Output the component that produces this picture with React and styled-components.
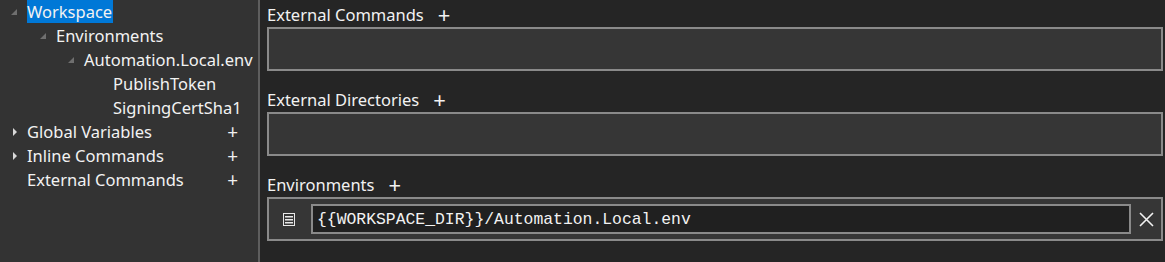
import React from 'react';
import styled, { createGlobalStyle } from 'styled-components';

const GlobalStyle = createGlobalStyle`
  html, body {
    margin: 0;
    padding: 0;
    height: 100%;
    background: #252525;
    overflow: hidden;
  }
  #root {
    height: 100%;
  }
`;

const uiFont = `'Segoe UI', 'Noto Sans', 'Open Sans', sans-serif`;

const Window = styled.div`
  display: flex;
  height: 100vh;
  font-family: ${uiFont};
  font-size: 16.5px;
  color: #f2f2f2;
`;

const Sidebar = styled.div`
  width: 258px;
  flex-shrink: 0;
  background: #333333;
  border-right: 2px solid #5e5e5e;
`;

const TreeRow = styled.div`
  display: flex;
  align-items: center;
  height: 24px;
  padding-left: ${({ $level }) => 10 + Math.round($level * 28.7)}px;
  padding-right: 20px;
`;

const Toggle = styled.span`
  width: 18px;
  height: 24px;
  flex-shrink: 0;
  display: flex;
  align-items: center;
  justify-content: flex-start;
  padding-left: ${({ $closed }) => ($closed ? 2 : 0)}px;
  box-sizing: border-box;
`;

const Label = styled.span`
  flex: 1;
  white-space: nowrap;
  line-height: 24px;
  > span {
    padding: 0 1px 0 0;
    margin-left: -1px;
    background: ${({ $selected }) => ($selected ? '#0078d7' : 'transparent')};
    display: inline-block;
    line-height: 23px;
  }
`;

const SidePlus = styled.span`
  font-size: 19px;
  line-height: 24px;
  color: #f0f0f0;
`;

const Expanded = () => (
  <svg width="8" height="8" viewBox="0 0 8 8">
    <path d="M7 1 L7 7 L1 7 Z" fill="#6f6f6f" />
  </svg>
);

const Collapsed = () => (
  <svg width="6" height="10" viewBox="0 0 6 10">
    <path d="M1 1 L5 5 L1 9 Z" fill="#d8d8d8" />
  </svg>
);

const TreeItem = ({ level, state, selected, plus, children }) => (
  <TreeRow $level={level}>
    <Toggle $closed={state === 'closed'}>
      {state === 'open' && <Expanded />}
      {state === 'closed' && <Collapsed />}
    </Toggle>
    <Label $selected={selected}>
      <span>{children}</span>
    </Label>
    {plus && <SidePlus>+</SidePlus>}
  </TreeRow>
);

const Main = styled.div`
  flex: 1;
  padding: 3px 2px 0 7px;
  display: flex;
  flex-direction: column;
  gap: 17px;
`;

const Section = styled.div`
  display: flex;
  flex-direction: column;
`;

const SectionHead = styled.div`
  display: flex;
  align-items: center;
  gap: 14px;
  height: 24px;
  line-height: 24px;
`;

const HeadPlus = styled.span`
  font-size: 22px;
  font-weight: 400;
  line-height: 20px;
  margin-top: -3px;
`;

const ListBox = styled.div`
  height: 44px;
  box-sizing: border-box;
  border: 2px solid #8a8a8a;
  background: #363636;
  display: flex;
  align-items: center;
  padding: 0 0 0 14px;
`;

const ItemIcon = () => (
  <svg width="12" height="13" viewBox="0 0 12 13" style={{ flexShrink: 0 }}>
    <rect x="0.5" y="0.5" width="11" height="12" fill="none" stroke="#e8e8e8" />
    <rect x="2" y="3" width="8" height="1.5" fill="#e8e8e8" />
    <rect x="2" y="6" width="8" height="1.5" fill="#e8e8e8" />
    <rect x="2" y="9" width="8" height="1.5" fill="#e8e8e8" />
  </svg>
);

const PathInput = styled.div`
  flex: 1;
  margin-left: 16px;
  height: 30px;
  box-sizing: border-box;
  border: 2px solid #8a8a8a;
  background: #202020;
  display: flex;
  align-items: center;
  padding-left: 4px;
  font-family: 'Liberation Mono', 'DejaVu Sans Mono', monospace;
  font-size: 16.4px;
  color: #f2f2f2;
`;

const RemoveButton = styled.span`
  width: 30px;
  display: flex;
  align-items: center;
  justify-content: center;
`;

const CloseIcon = () => (
  <svg width="15" height="15" viewBox="0 0 15 15">
    <path d="M1 1 L14 14 M14 1 L1 14" stroke="#f2f2f2" strokeWidth="1.6" />
  </svg>
);

const App = () => (
  <>
    <GlobalStyle />
    <Window>
      <Sidebar>
        <TreeItem level={0} state="open" selected>Workspace</TreeItem>
        <TreeItem level={1} state="open">Environments</TreeItem>
        <TreeItem level={2} state="open">Automation.Local.env</TreeItem>
        <TreeItem level={3}>PublishToken</TreeItem>
        <TreeItem level={3}>SigningCertSha1</TreeItem>
        <TreeItem level={0} state="closed" plus>Global Variables</TreeItem>
        <TreeItem level={0} state="closed" plus>Inline Commands</TreeItem>
        <TreeItem level={0} plus>External Commands</TreeItem>
      </Sidebar>
      <Main>
        <Section>
          <SectionHead>
            External Commands <HeadPlus>+</HeadPlus>
          </SectionHead>
          <ListBox />
        </Section>
        <Section>
          <SectionHead>
            External Directories <HeadPlus>+</HeadPlus>
          </SectionHead>
          <ListBox />
        </Section>
        <Section>
          <SectionHead>
            Environments <HeadPlus>+</HeadPlus>
          </SectionHead>
          <ListBox>
            <ItemIcon />
            <PathInput>{'{{WORKSPACE_DIR}}/Automation.Local.env'}</PathInput>
            <RemoveButton>
              <CloseIcon />
            </RemoveButton>
          </ListBox>
        </Section>
      </Main>
    </Window>
  </>
);

export default App;
